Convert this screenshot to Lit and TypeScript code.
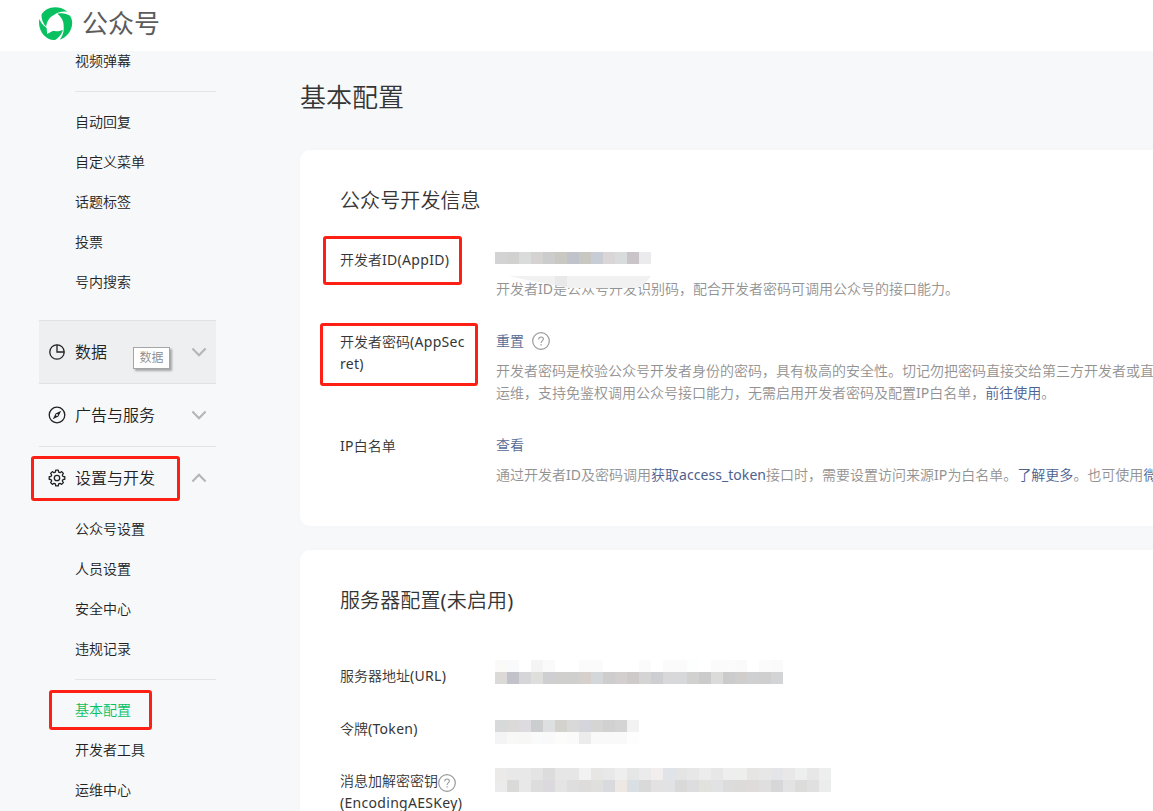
import { LitElement, html, css, svg } from "lit";
import { customElement, property } from "lit/decorators.js";

const URL_ROWS = [
  "fafaf8 f9fafc ffffff f4f4f4 fafafa ffffff ffffff fbfbfb fbfbfb ffffff ffffff ffffff fbfbfb ffffff fbfbfb fbfbfb fdffff ffffff fbfbfb fbfbfb fafafa ffffff fbfbfb fafafa",
  "dbdad8 c2c2ca d6d6d8 dededc cfcfd1 d0cfcd cfcfcd d5d0cc d3d7da cdcdcd d4cfcf cfcaca d4d4d4 cdced1 d8d8da d6d8da d1d1cf cbcbcb dbdbd9 cbcbcb cfcecc cfd0d2 cfcfcf d3d4d6",
];
const TOKEN_ROWS = [
  "d8dad9 dbdad8 dddbdf cbcdcf dedfe1 d3d2cd d9d9d9 d5d6db d5d6d4 d1d1d1 d4d4d4 f2f2f2",
  "f4f4f4 f8f8f6 f7f7f5 f9fbfa f9f9f9 fcfcfa fafafa ececec f9f9f9 f9f9f9 f9f9f9 fdfdfd",
];
const KEY_ROWS = [
  "ebeae8 e8e8e8 e8e8e8 e4e4e4 dcdcdd e6e6e6 e6e6e6 f2f2f2 e7e6e4 e8e8e8 eeeeee e5e7e6 ebebeb f2eeed e0e4e8 e4e4e4 e7e7e7 ececec e7e7e7 eeeeee eeeeec e6e5e3 e7e7e7 e4e5e8 e8e8e8 edefee e7e7e7 edefef",
  "ebebeb dadad8 e8e8e8 dddddd dbd9dd e4e4e4 dedede dddcda dfdfdd d9dadd ede8e4 dadfe3 d9d9d9 e3e1e2 e1e2e4 d9d9d9 dddde0 e1e2dd e1e2e4 dcdcdc dcdbd9 dfdbda dedfde d7d7da e3e3e3 dcdcda e0e0e0 ebeded",
];
const ID_ROW = [
  "d3d3d3 d1d1cf dadcdb d4d3d1 cccccc c9c8c3 c0c3ca c8c7c1 c8ccd5 dad5d7 d9dcdc c9c4c8 ebebed",
];

@customElement("pixel-strip")
class PixelStrip extends LitElement {
  @property({ attribute: false }) rows: string[] = [];
  static styles = css`
    :host { display: block; }
    svg { display: block; }
  `;
  render() {
    const grid = this.rows.map((r) => r.split(" "));
    const w = grid.length ? grid[0].length * 12 : 0;
    const h = grid.length * 12;
    return html`<svg width=${w} height=${h} shape-rendering="crispEdges">
      ${grid.map((r, y) => r.map((c, x) => svg`<rect x=${x * 12} y=${y * 12} width="12" height="12" fill=${"#" + c}></rect>`))}
    </svg>`;
  }
}

const help = html`<svg class="help" width="18" height="18" viewBox="0 0 18 18" fill="none" stroke="#9a9a9a">
  <circle cx="9" cy="9" r="8.3" stroke-width="1.2"></circle>
  <path d="M6.7 7.4C6.7 5.9 7.700 5 9.100 5s2.300.9 2.300 2.100c0 1.700-2.300 1.900-2.300 3.800" stroke-width="1.1"></path>
  <path d="M9.1 12.2v1.3" stroke-width="1.3"></path>
</svg>`;

const chevron = (up: boolean) => html`<svg class="chevron" width="16" height="10" viewBox="0 0 16 10" fill="none" stroke="#b4b5b7" stroke-width="2.1">
  <path d=${up ? "M1.4 8.4 8 1.8l6.600 6.600" : "M1.4 1.6 8 8.2l6.600-6.600"}></path>
</svg>`;

const gearPath = (() => {
  const pts: string[] = [];
  const n = 8;
  for (let i = 0; i < n; i++) {
    const a = (i * 2 * Math.PI) / n - Math.PI / 2;
    for (const [d, r] of [[-0.27, 6.1], [-0.16, 7.9], [0.16, 7.9], [0.27, 6.1]]) {
      pts.push(`${(9 + r * Math.cos(a + d)).toFixed(2)} ${(9 + r * Math.sin(a + d)).toFixed(2)}`);
    }
  }
  return "M" + pts.join("L") + "Z";
})();

const icons = {
  data: html`<svg class="icon" width="18" height="18" viewBox="0 0 18 18" fill="none" stroke="#222" stroke-width="1.3">
    <circle cx="9" cy="9" r="7.2"></circle><path d="M9 1.8V9h7.2"></path></svg>`,
  ads: html`<svg class="icon" width="18" height="18" viewBox="0 0 18 18">
    <circle cx="9" cy="9" r="7.8" fill="none" stroke="#222" stroke-width="1.3"></circle>
    <path d="M13.2 4.8 10.4 10.4 4.8 13.2 7.6 7.6Z" fill="#222"></path><circle cx="9" cy="9" r="1" fill="#f7f8fa"></circle></svg>`,
  settings: html`<svg class="icon" width="18" height="18" viewBox="0 0 18 18" fill="none" stroke="#222" stroke-width="1.3" stroke-linejoin="round">
    <path d=${gearPath}></path><circle cx="9" cy="9" r="2.7"></circle></svg>`,
};

const blade = "M-16.100-4.500C-18.400 7-9.500 17.300-.5 16.500C3 14.500 6 11.300 7.500 6.500C2 8.700-3.200 8-6.500 5.600C-10.500 4-14.300.5-16.100-4.500Z";

@customElement("app-root")
class AppRoot extends LitElement {
  static styles = css`
    :host {
      display: flex; flex-direction: column; position: relative;
      height: 811px; width: 100%; overflow: hidden;
      background: #f7f8fa; color: #353535;
      font: 350 14px/22px "Noto Sans CJK SC", sans-serif;
    }
    * { box-sizing: border-box; }
    .l { font-family: "Noto Sans", sans-serif; font-weight: 400; line-height: 1; letter-spacing: .3px; }
    .desc .l { letter-spacing: .05px; }
    header { flex: none; height: 51px; background: #fff; display: flex; align-items: center; padding: 0 0 5px 38px; gap: 9px; z-index: 1; }
    .brand { font-size: 26px; line-height: 30px; color: #5c5c5c; padding-bottom: 2px; font-weight: 400; }
    .body { flex: 1; min-height: 0; display: flex; }
    nav { flex: none; width: 300px; padding-left: 39px; margin-top: -10px; color: #222; }
    .items { width: 177px; padding-left: 36px; }
    .item { height: 40px; line-height: 38px; }
    .item.on { color: #07c160; }
    .sep { height: 1px; margin: 10px 0; background: #e4e5e8; }
    .group { width: 177px; height: 63px; border-top: 1px solid #e1e2e4; display: flex; align-items: center; padding: 0 9px; font-size: 16px; }
    .group span { padding-bottom: 2px; }
    .group.hover { margin-top: 18px; background: #eeeff1; }
    .icon { flex: none; margin-right: 9px; }
    .chevron { margin-left: auto; }
    main { flex: 1; min-width: 0; padding-top: 27px; }
    h1 { margin: 0; font-size: 26px; line-height: 36px; font-weight: inherit; }
    .card { background: #fff; border-radius: 10px 0 0 10px; padding: 38px 0 0 40px; white-space: nowrap; box-shadow: 0 0 6px rgba(0, 0, 0, .015); }
    .first { margin-top: 36px; height: 376px; }
    .second { margin-top: 24px; height: 300px; }
    h2 { margin: 0; font-size: 20px; line-height: 24px; font-weight: inherit; letter-spacing: .1px; }
    .row { display: flex; gap: 28px; }
    .label { width: 128px; flex: none; }
    .first .row { margin-top: 30px; }
    .first .label { padding-top: 1px; }
    .first h2 + .row { margin-top: 35px; }
    .value { height: 22px; display: flex; align-items: center; gap: 8px; }
    .value .help { margin-top: 2px; }
    .strip { margin: 5px 0 0 -1px; height: 17px; }
    .desc { margin-top: 8px; color: #929292; }
    .link { color: #576b95; }
    .desc .link { color: #4c618f; }
    .second .row { margin-top: 31px; }
    .second h2 + .row { margin-top: 52px; }
    .second .row:last-child { margin-top: 30px; }
    .pix { margin: -4px 0 0 -1px; height: 22px; }
    .pix.token { margin-top: 3px; height: 19px; }
    .pix.key { margin-top: -1px; }
    .keyline { display: flex; align-items: center; height: 22px; }
    .keyline .help { margin-top: 5px; }
    .help { flex: none; }
    .mark { position: absolute; border: 3px solid #ff2015; border-radius: 3px; }
    .m1 { left: 323px; top: 236px; width: 139px; height: 49px; }
    .m2 { left: 320px; top: 323px; width: 158px; height: 63px; }
    .m3 { left: 31px; top: 456px; width: 149px; height: 45px; }
    .m4 { left: 49px; top: 690px; width: 103px; height: 40px; }
    .tip { position: absolute; left: 133px; top: 347px; width: 37px; height: 22px; border: 1px solid #a5a5a5; background: #fff; color: #8c8c8c; font-size: 12px; line-height: 18px; text-align: center; box-shadow: 2px 2px 2px rgba(0, 0, 0, .3); }
    .smear { position: absolute; left: 495px; top: 276px; }
  `;

  render() {
    const item = (t: string, on = false) => html`<div class="item ${on ? "on" : ""}">${t}</div>`;
    return html`
      <header>
        <svg width="35" height="35" viewBox="-17.500 -17.500 35 35" fill="#07c160">
          <path d=${blade}></path>
          <path d=${blade} transform="rotate(120)"></path>
          <path d=${blade} transform="rotate(240)"></path>
          <path d="M-9 3.500-8.300 10.600-2 7Z" fill="#fff"></path>
        </svg>
        <span class="brand">公众号</span>
      </header>
      <div class="body">
        <nav>
          <div class="items">
            ${item("视频弹幕")}
            <div class="sep"></div>
            ${["自动回复", "自定义菜单", "话题标签", "投票", "号内搜索"].map((t) => item(t))}
          </div>
          <div class="group hover">${icons.data}<span>数据</span>${chevron(false)}</div>
          <div class="group">${icons.ads}<span>广告与服务</span>${chevron(false)}</div>
          <div class="group">${icons.settings}<span>设置与开发</span>${chevron(true)}</div>
          <div class="items">
            ${["公众号设置", "人员设置", "安全中心", "违规记录"].map((t) => item(t))}
            <div class="sep"></div>
            ${item("基本配置", true)}${item("开发者工具")}${item("运维中心")}
          </div>
        </nav>
        <main>
          <h1>基本配置</h1>
          <section class="card first">
            <h2>公众号开发信息</h2>
            <div class="row">
              <div class="label">开发者<span class="l">ID(AppID)</span></div>
              <div>
                <div class="strip"><pixel-strip .rows=${ID_ROW}></pixel-strip></div>
                <div class="desc">开发者<span class="l">ID</span>是公众号开发识别码，配合开发者密码可调用公众号的接口能力。</div>
              </div>
            </div>
            <div class="row">
              <div class="label">开发者密码<span class="l">(AppSec<br>ret)</span></div>
              <div>
                <div class="value"><span class="link">重置</span>${help}</div>
                <div class="desc">开发者密码是校验公众号开发者身份的密码，具有极高的安全性。切记勿把密码直接交给第三方开发者或直<br>运维，支持免鉴权调用公众号接口能力，无需启用开发者密码及配置<span class="l">IP</span>白名单，<span class="link">前往使用</span>。</div>
              </div>
            </div>
            <div class="row">
              <div class="label"><span class="l">IP</span>白名单</div>
              <div>
                <div class="value"><span class="link">查看</span></div>
                <div class="desc">通过开发者<span class="l">ID</span>及密码调用<span class="link">获取<span class="l">access_token</span></span>接口时，需要设置访问来源<span class="l">IP</span>为白名单。<span class="link">了解更多</span>。也可使用<span class="link">微</span></div>
              </div>
            </div>
          </section>
          <section class="card second">
            <h2>服务器配置<span class="l">(</span>未启用<span class="l">)</span></h2>
            <div class="row">
              <div class="label">服务器地址<span class="l">(URL)</span></div>
              <div class="pix"><pixel-strip .rows=${URL_ROWS}></pixel-strip></div>
            </div>
            <div class="row">
              <div class="label">令牌<span class="l">(Token)</span></div>
              <div class="pix token"><pixel-strip .rows=${TOKEN_ROWS}></pixel-strip></div>
            </div>
            <div class="row">
              <div class="label"><div class="keyline">消息加解密密钥${help}</div><span class="l">(EncodingAESKey)</span></div>
              <div class="pix key"><pixel-strip .rows=${KEY_ROWS}></pixel-strip></div>
            </div>
          </section>
        </main>
      </div>
      <svg class="smear" width="156" height="12" viewBox="0 0 156 12">
        <path d="M14 0H156C152 6 148 9 143 12H75C55 8 35 5 14 0Z" fill="#f1f1f1"></path>
        <path d="M60 0H72V11.500L60 9Z" fill="#e9e9e9"></path>
      </svg>
      <div class="tip">数据</div>
      <div class="mark m1"></div><div class="mark m2"></div><div class="mark m3"></div><div class="mark m4"></div>
    `;
  }
}
